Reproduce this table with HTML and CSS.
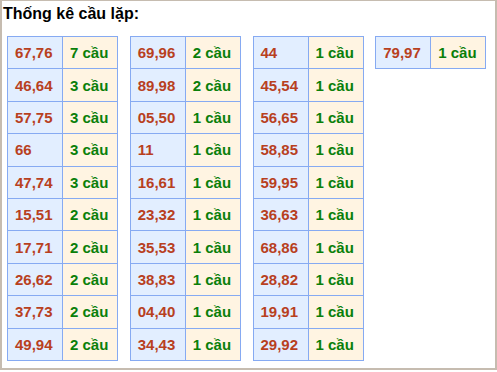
FILE: index.html
```html
<!DOCTYPE html>
<html>
<head>
<meta charset="utf-8">
<link rel="stylesheet" href="styles.css">
</head>
<body>
<div class="frame">
  <div class="title">Thống kê cầu lặp:</div>
  <div class="tables">
    <table class="stat">
      <tr><td class="num">67,76</td><td class="cnt">7 cầu</td></tr>
      <tr><td class="num">46,64</td><td class="cnt">3 cầu</td></tr>
      <tr><td class="num">57,75</td><td class="cnt">3 cầu</td></tr>
      <tr><td class="num">66</td><td class="cnt">3 cầu</td></tr>
      <tr><td class="num">47,74</td><td class="cnt">3 cầu</td></tr>
      <tr><td class="num">15,51</td><td class="cnt">2 cầu</td></tr>
      <tr><td class="num">17,71</td><td class="cnt">2 cầu</td></tr>
      <tr><td class="num">26,62</td><td class="cnt">2 cầu</td></tr>
      <tr><td class="num">37,73</td><td class="cnt">2 cầu</td></tr>
      <tr><td class="num">49,94</td><td class="cnt">2 cầu</td></tr>
    </table>
    <table class="stat">
      <tr><td class="num">69,96</td><td class="cnt">2 cầu</td></tr>
      <tr><td class="num">89,98</td><td class="cnt">2 cầu</td></tr>
      <tr><td class="num">05,50</td><td class="cnt">1 cầu</td></tr>
      <tr><td class="num">11</td><td class="cnt">1 cầu</td></tr>
      <tr><td class="num">16,61</td><td class="cnt">1 cầu</td></tr>
      <tr><td class="num">23,32</td><td class="cnt">1 cầu</td></tr>
      <tr><td class="num">35,53</td><td class="cnt">1 cầu</td></tr>
      <tr><td class="num">38,83</td><td class="cnt">1 cầu</td></tr>
      <tr><td class="num">04,40</td><td class="cnt">1 cầu</td></tr>
      <tr><td class="num">34,43</td><td class="cnt">1 cầu</td></tr>
    </table>
    <table class="stat">
      <tr><td class="num">44</td><td class="cnt">1 cầu</td></tr>
      <tr><td class="num">45,54</td><td class="cnt">1 cầu</td></tr>
      <tr><td class="num">56,65</td><td class="cnt">1 cầu</td></tr>
      <tr><td class="num">58,85</td><td class="cnt">1 cầu</td></tr>
      <tr><td class="num">59,95</td><td class="cnt">1 cầu</td></tr>
      <tr><td class="num">36,63</td><td class="cnt">1 cầu</td></tr>
      <tr><td class="num">68,86</td><td class="cnt">1 cầu</td></tr>
      <tr><td class="num">28,82</td><td class="cnt">1 cầu</td></tr>
      <tr><td class="num">19,91</td><td class="cnt">1 cầu</td></tr>
      <tr><td class="num">29,92</td><td class="cnt">1 cầu</td></tr>
    </table>
    <table class="stat">
      <tr><td class="num">79,97</td><td class="cnt">1 cầu</td></tr>
    </table>
  </div>
</div>
</body>
</html>
```
FILE: styles.css
```css
html, body {
  margin: 0;
  padding: 0;
  background: #ffffff;
}
.frame {
  box-sizing: border-box;
  width: 497px;
  height: 370px;
  border: 2px solid #c6bcb0;
  border-top-width: 1px;
  font-family: "Liberation Sans", Arial, sans-serif;
}
.title {
  font-size: 16px;
  font-weight: bold;
  color: #000;
  padding: 4px 0 0 1px;
  height: 30px;
  box-sizing: border-box;
  line-height: 18px;
}
.tables {
  display: flex;
  align-items: flex-start;
  gap: 11.75px;
  padding: 5px 0 0 5px;
}
.stat {
  border-collapse: collapse;
  width: 111px;
  table-layout: fixed;
}
.stat tr {
  height: 32.4px;
}
.stat td {
  border: 1px solid #86aaf2;
  padding: 0 0 0 7px;
  font-size: 15px;
  font-weight: bold;
  text-align: left;
  vertical-align: middle;
  white-space: nowrap;
}
.num {
  background: #e2eeff;
  color: #b8401e;
  width: 47px;
}
.cnt {
  background: #fff4e2;
  color: #0a7f0a;
}
```
